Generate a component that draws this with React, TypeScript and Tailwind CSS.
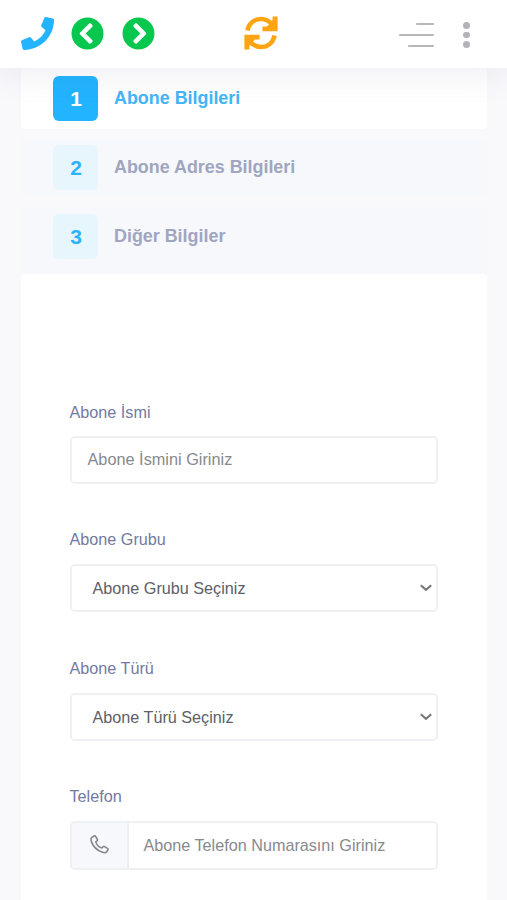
import React from "react";
import { FaPhone, FaChevronCircleLeft, FaChevronCircleRight } from "react-icons/fa";

function RefreshIcon() {
  return (
    <svg width="34" height="34" viewBox="0 0 34 34" fill="none" stroke="#ffa412" strokeWidth="4.600">
      <path d="M3.400 14.600C5 7.200 10.400 3 17 3c4.800 0 8.600 2.200 11.600 6" />
      <path d="M33.600.6v14.600H18.400v-4.600h4.600l5.600-6.400V.6z" fill="#ffa412" stroke="none" />
      <path d="M30.600 19.400C29 26.800 23.600 31 17 31c-4.800 0-8.600-2.200-11.600-6" />
      <path d="M.4 33.400V18.800h15.200v4.600H11l-5.600 6.400v3.600z" fill="#ffa412" stroke="none" />
    </svg>
  );
}

function Header() {
  return (
    <header className="relative z-10 flex h-[68px] items-center bg-white pb-[2px] pl-[21px] shadow-[0_4px_36px_rgba(82,63,105,0.11)]">
      <FaPhone className="size-[33px] text-[#22b4ff]" />
      <FaChevronCircleLeft className="ml-[17px] size-[33px] text-[#07c74f]" />
      <FaChevronCircleRight className="ml-[18px] size-[33px] text-[#07c74f]" />
      <div className="ml-[89px]">
        <RefreshIcon />
      </div>
      <div className="ml-[121px] mt-[3px] flex w-[35px] flex-col items-end gap-[9px]">
        <span className="h-[2px] w-[18px] rounded-full bg-[#b7b7bc]" />
        <span className="h-[2px] w-[35px] rounded-full bg-[#b7b7bc]" />
        <span className="h-[2px] w-[26px] rounded-full bg-[#b7b7bc]" />
      </div>
      <div className="ml-[29px] mt-[4px] flex flex-col gap-[3px]">
        <span className="size-[6.5px] rounded-full bg-[#b2b2b8]" />
        <span className="size-[6.5px] rounded-full bg-[#b2b2b8]" />
        <span className="size-[6.5px] rounded-full bg-[#b2b2b8]" />
      </div>
    </header>
  );
}

function Step({ n, title, active = false }: { n: number; title: string; active?: boolean }) {
  return (
    <div className={active ? "flex h-[61px] items-center gap-4 rounded-b bg-white pl-8" : "flex items-center gap-4 pl-8"}>
      <span
        className={
          active
            ? "flex size-[45px] items-center justify-center rounded-md bg-[#22b4ff] pt-px pl-px text-[21px] font-bold text-white"
            : "flex size-[45px] items-center justify-center rounded-md bg-[#e7f5fd] pl-px text-[21px] font-bold text-[#2bb3fb]"
        }
      >
        {n}
      </span>
      <span className={active ? "text-[17.9px] font-bold text-[#41b6f7]" : "text-[17.9px] font-bold text-[#a0a5c0]"}>{title}</span>
    </div>
  );
}

function Label({ children }: { children: React.ReactNode }) {
  return <label className="block h-6 text-[16.2px] leading-6 text-[#7479a2]">{children}</label>;
}

function SelectField({ label, text }: { label: string; text: string }) {
  return (
    <div>
      <Label>{label}</Label>
      <div className="mt-[13px] flex h-12 items-center justify-between rounded-[5px] border-2 border-[#eff0f3] pr-[4px] pl-[21px] text-[16.2px] text-[#5d6067]">
        {text}
        <svg width="12" height="8" viewBox="0 0 12 8" fill="none" stroke="#77777a" strokeWidth="2.1">
          <path d="M.8 1.300 6 5.900l5.200-4.600" />
        </svg>
      </div>
    </div>
  );
}

export default function App() {
  return (
    <div className="h-[900px] overflow-hidden bg-[#f9f9fc] font-['Liberation_Sans',Arial,sans-serif]">
      <Header />
      <main className="pr-5 pl-[21px]">
        <section>
          <Step n={1} title="Abone Bilgileri" active />
          <div className="mt-[10px] flex h-[57px] flex-col justify-center bg-[#f6f8fb]">
            <Step n={2} title="Abone Adres Bilgileri" />
          </div>
          <div className="mt-[11px] flex h-[67px] flex-col bg-[#f6f8fb] pt-[7px]">
            <Step n={3} title="Diğer Bilgiler" />
          </div>
        </section>
        <form className="flex h-[640px] flex-col gap-[43.4px] rounded-t-[5px] bg-white pr-[48.6px] pl-[48.5px] pt-[126px]">
          <div>
            <Label>Abone İsmi</Label>
            <div className="mt-[12px] flex h-12 items-center rounded-[5px] border-2 border-[#eff0f3] pb-[2px] pl-4 text-[16.3px] text-[#87898f]">
              Abone İsmini Giriniz
            </div>
          </div>
          <SelectField label="Abone Grubu" text="Abone Grubu Seçiniz" />
          <SelectField label="Abone Türü" text="Abone Türü Seçiniz" />
          <div>
            <Label>Telefon</Label>
            <div className="mt-[13px] flex h-[49px] items-center overflow-hidden rounded-[5px] border-2 border-[#eff0f3] text-[16.2px] text-[#87898f]">
              <span className="flex h-full w-[57px] items-center justify-center border-r-2 border-[#eceef2] bg-[#f7f8fb] pb-[2px]">
                <svg width="19" height="19" viewBox="0 0 20 20" fill="none" stroke="#85878e" strokeWidth="1.700" strokeLinejoin="round">
                  <path d="M2.300 2.300 4.200 1.100c.7-.4 1.300-.3 1.700.4l1.800 3c.4.6.2 1.200-.3 1.600L6.100 7.200c.7 2.900 3.500 5.700 6.400 6.500l1.300-1.300c.5-.5 1-.6 1.600-.2l3 1.900c.6.4.8 1 .4 1.700l-1.200 1.800c-.9 1.300-2.800 1.400-5 .4C7.800 16.200 3.300 11.700 1.600 7.200c-.8-2.100-.6-4 .7-4.900Z" />
                </svg>
              </span>
              <span className="pb-[2px] pl-[15px]">Abone Telefon Numarasını Giriniz</span>
            </div>
          </div>
        </form>
      </main>
    </div>
  );
}
